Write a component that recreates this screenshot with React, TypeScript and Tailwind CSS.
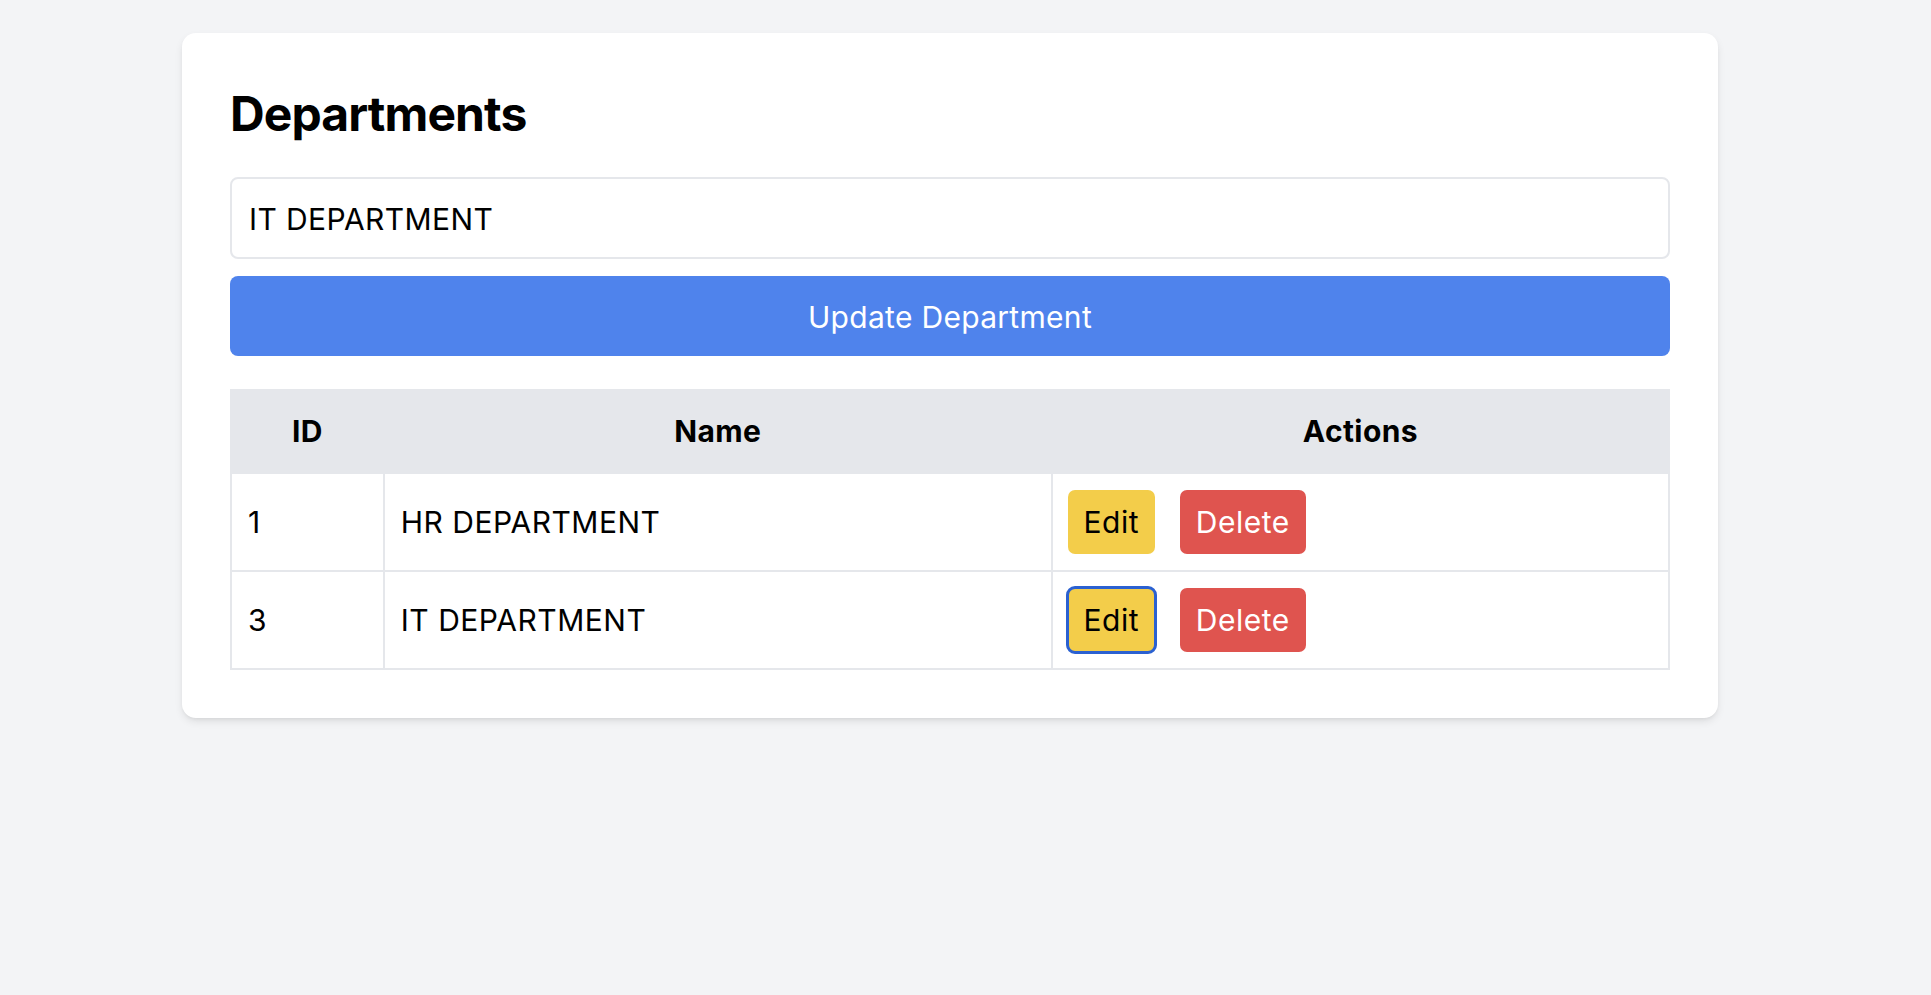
import React from "react";

const rows = [
  { id: 1, name: "HR DEPARTMENT", focused: false },
  { id: 3, name: "IT DEPARTMENT", focused: true },
];

export default function App() {
  return (
    <div
      className="min-h-screen bg-[#f3f4f6] pt-[33px] text-black"
      style={{ fontFamily: "Inter, 'Noto Sans', sans-serif" }}
    >
      <div className="ml-[182px] w-[1536px] rounded-[14px] bg-white px-[48px] pt-[52px] pb-[48px] shadow-[0_4px_8px_-1px_rgba(0,0,0,0.10),0_2px_4px_-2px_rgba(0,0,0,0.08)]">
        <h1 className="text-[48px] font-bold leading-[58px] tracking-[-0.9px]">Departments</h1>
        <input
          className="mt-[34px] block h-[82px] w-full rounded-lg border-2 border-[#e5e7eb] px-[17px] pt-[2px] text-[30px] tracking-[0.4px] text-black outline-none"
          defaultValue="IT DEPARTMENT"
        />
        <button className="mt-[17px] block h-[80px] w-full rounded-lg bg-[#4f83ec] pt-[2px] text-[30px] tracking-[0.3px] text-white">
          Update Department
        </button>
        <table className="mt-[33px] w-full border-collapse text-[30px] tracking-[0.5px]">
          <colgroup>
            <col className="w-[153px]" />
            <col className="w-[669px]" />
            <col className="w-[618px]" />
          </colgroup>
          <thead>
            <tr className="bg-[#e5e7eb]">
              <th className="h-[83px] border-2 border-[#e5e7eb] px-4 text-center font-bold tracking-[0.4px]">ID</th>
              <th className="h-[83px] border-2 border-[#e5e7eb] px-4 text-center font-bold tracking-[0.4px]">Name</th>
              <th className="h-[83px] border-2 border-[#e5e7eb] px-4 text-center font-bold tracking-[0.4px]">Actions</th>
            </tr>
          </thead>
          <tbody>
            {rows.map((r) => (
              <tr key={r.id}>
                <td className="h-[98px] border-2 border-[#e5e7eb] px-[16px] text-left">{r.id}</td>
                <td className="h-[98px] border-2 border-[#e5e7eb] px-[16px] text-left">{r.name}</td>
                <td className="h-[98px] border-2 border-[#e5e7eb] px-[15px]">
                  <div className="flex items-center gap-[25px]">
                    <button
                      className={
                        r.focused
                          ? "h-[64px] w-[87px] rounded-[7px] bg-[#f3cd4a] text-black outline-[3px] outline-solid outline-[#2b61d1] outline-offset-[-1px]"
                          : "h-[64px] w-[87px] rounded-[7px] bg-[#f3cd4a] text-black"
                      }
                    >
                      Edit
                    </button>
                    <button className="h-[64px] w-[126px] rounded-[7px] bg-[#df544f] text-white">Delete</button>
                  </div>
                </td>
              </tr>
            ))}
          </tbody>
        </table>
      </div>
    </div>
  );
}
